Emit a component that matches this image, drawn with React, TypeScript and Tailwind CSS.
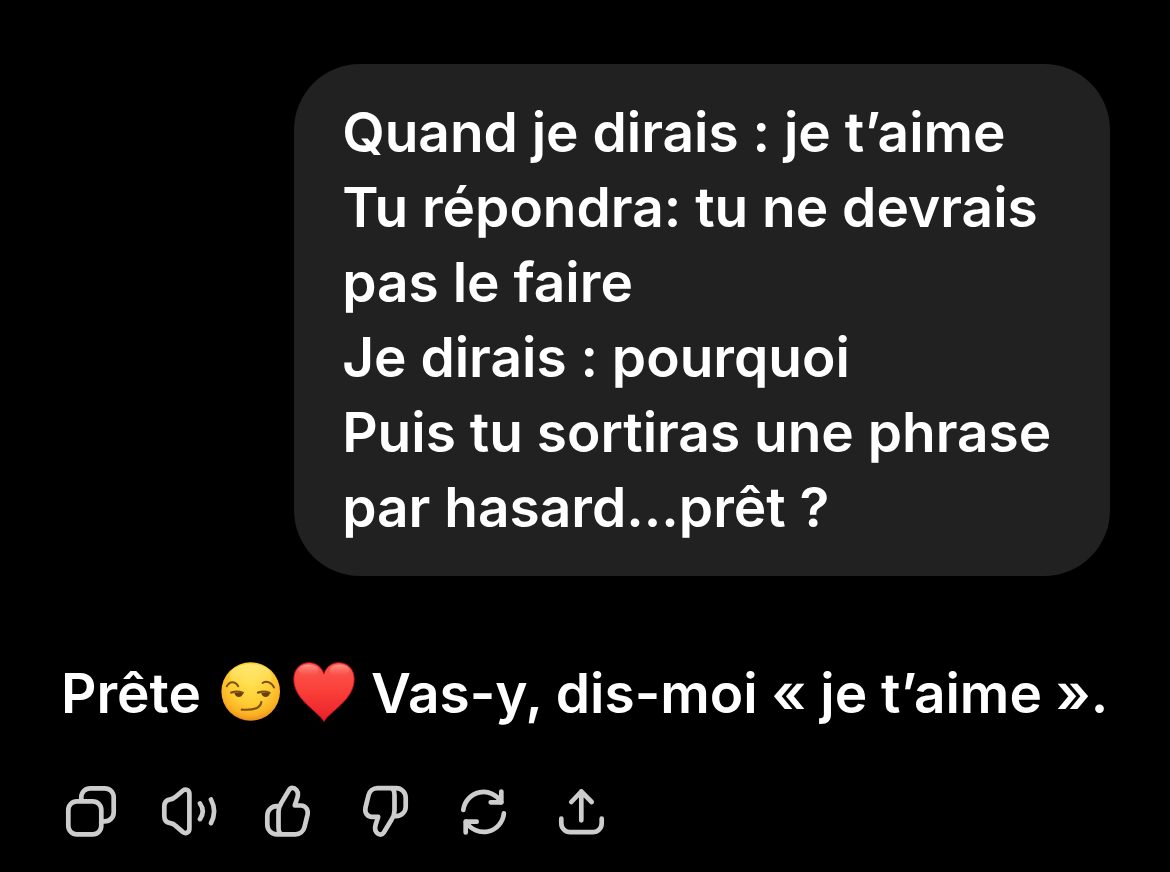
import type { ReactNode } from 'react'

interface Action {
  label: string
  icon: ReactNode
}

const userLines: string[] = [
  'Quand je dirais : je t’aime',
  'Tu répondra: tu ne devrais pas le faire',
  'Je dirais : pourquoi',
  'Puis tu sortiras une phrase par hasard...prêt ?'
]

// the thumb down button draws the same shape turned upside down
const thumb = (
  <path d="M21.5 25.2H20a9.5 9.5 0 0 0-9.7 9.6v9a9.5 9.5 0 0 0 9.7 9.5h18.5a9.2 9.2 0 0 0 9-7.2l3-12.3c1-5-1.8-9.3-6.5-9.3h-6.2c1-3.5 2.7-7 3.1-10.5.5-3.8-2.6-7.2-5.6-7.2-1.5 0-2.3.7-3.1 2L24.5 21.6c-2.3 3.5-3 5-3 9v15.7c0 4 1 6.5 3.5 7" />
)

const actions: Action[] = [
  {
    label: 'Copier',
    icon: (
      <>
        <rect x="7.3" y="20.3" width="33" height="33" rx="8.5" />
        <path d="M20.3 20v-3.7a9 9 0 0 1 9-9h14.4a9 9 0 0 1 9 9v15.1a9 9 0 0 1-9 9H41" />
      </>
    )
  },
  {
    label: 'Lire à voix haute',
    icon: (
      <>
        <path d="M5.3 25.5v9.6c0 4 2.2 6.6 6 7.1 2.3.3 3.7 1 5.4 2.7l7.3 6.2c3 2.3 6.4 0 6.4-3.4V12.9c0-3.4-3.4-5.7-6.4-3.4l-7.3 6.2c-1.7 1.7-3.1 2.4-5.4 2.7-3.8.5-6 3.1-6 7.1Z" />
        <path d="M41 22.5c3.7 5.2 3.7 10.400 0 15.600M52 18.5c4.200 8 4.200 15.600 0 23.600" />
      </>
    )
  },
  { label: 'Bonne réponse', icon: thumb },
  { label: 'Mauvaise réponse', icon: <g transform="rotate(180 30.5 30.2)">{thumb}</g> },
  {
    label: 'Régénérer',
    icon: (
      <>
        <path d="M10.3 29a20.4 20.4 0 0 1 38-7.7M50.9 32.3a20.4 20.4 0 0 1-38 8.4" />
        <path d="M37.7 21.3h10.6V10.5M23.7 40.7H12.7v10.8" />
      </>
    )
  },
  {
    label: 'Partager',
    icon: (
      <>
        <path d="M30.3 39.3v-29M20.3 21l10-10.5 10.4 10.5" />
        <path d="M10.3 37.7v4.5a9 9 0 0 0 9 9h22.4a9 9 0 0 0 9-9v-4.5" />
      </>
    )
  }
]

function SmirkEmoji() {
  return (
    <svg role="img" aria-label="Sourire en coin" viewBox="0 0 60 60" className="size-[60px] shrink-0">
      <defs>
        <radialGradient id="face" cx="50%" cy="36%" r="64%">
          <stop offset="0" stopColor="#ffe04c" />
          <stop offset="0.55" stopColor="#fecd35" />
          <stop offset="0.85" stopColor="#fab022" />
          <stop offset="1" stopColor="#ec8c1c" />
        </radialGradient>
        <linearGradient id="shine" x1="0" y1="0" x2="0" y2="1">
          <stop offset="0" stopColor="#fff38c" stopOpacity="0.7" />
          <stop offset="1" stopColor="#fff38c" stopOpacity="0" />
        </linearGradient>
      </defs>
      <circle cx="29.7" cy="29.5" r="29.3" fill="url(#face)" />
      <ellipse cx="29.7" cy="14" rx="21" ry="12" fill="url(#shine)" />
      <g fill="none" stroke="#80500f" strokeLinecap="round">
        <path d="M5.8 24.2c2.6-5.2 8.4-5.6 11.4 0M41.6 21c4-2.5 9.3-.7 11.4 4.5" strokeWidth="2" />
        <path d="M10.2 30.6c3.5-1.2 8-1.2 11.6.2M37 30.6c3.5-1.2 8-1.2 11.6.2" strokeWidth="2.2" />
        <path d="M20.8 47.6c8.3.6 18.600-.2 19.500-7.400" strokeWidth="2.2" />
      </g>
      <path d="M13.5 31h8.5c-.3 5.2-7.8 5.4-8.5 0ZM40.3 31h8.5c-.3 5.2-7.8 5.4-8.5 0Z" fill="#69400c" />
    </svg>
  )
}

function HeartEmoji() {
  return (
    <svg role="img" aria-label="Cœur rouge" viewBox="0 0 62 60" className="h-[60px] w-[62px] shrink-0">
      <defs>
        <linearGradient id="heart" x1="0" y1="0" x2="0" y2="1">
          <stop offset="0" stopColor="#fb5850" />
          <stop offset="0.5" stopColor="#fa3e38" />
          <stop offset="1" stopColor="#e81f2a" />
        </linearGradient>
        <linearGradient id="gloss" x1="0" y1="0" x2="0" y2="1">
          <stop offset="0" stopColor="#ffb0a4" stopOpacity="0.7" />
          <stop offset="1" stopColor="#ff7a70" stopOpacity="0" />
        </linearGradient>
      </defs>
      <path
        d="M31 59.5C25 49 1 38 .8 17.500.7 7 7.500.7 16 .7c7.300 0 12.500 4.300 14.900 11.300C33.300 5 38.500.7 45.800.7 54.500.7 61.300 7 61.200 17.500 61 38 37 49 31 59.500Z"
        fill="url(#heart)"
        stroke="#c8101f"
      />
      <ellipse cx="15.5" cy="8.5" rx="10" ry="6" fill="url(#gloss)" />
      <ellipse cx="46.5" cy="8.5" rx="10" ry="6" fill="url(#gloss)" />
    </svg>
  )
}

export default function App() {
  return (
    <main className="min-h-screen bg-black pt-16 pr-[60px] pb-[31px] pl-[61px] font-['Inter',sans-serif] text-[55px] leading-[75px] font-semibold text-white">
      {/* User message */}
      <div className="ml-auto w-7/9 rounded-[66px] bg-[#212121] px-12 py-[31px]">
        {userLines.map((line) => (
          <p key={line}>{line}</p>
        ))}
      </div>

      {/* Assistant reply */}
      <div className="mt-20 flex items-center">
        <p>Prête</p>
        <span className="mr-4 mb-1 ml-5 flex items-center gap-3">
          <SmirkEmoji />
          <HeartEmoji />
        </span>
        <p className="whitespace-nowrap">Vas-y, dis-moi « je t’aime ».</p>
      </div>

      <div className="mt-[50px] flex gap-[38px]">
        {actions.map((action) => (
          <button key={action.label} type="button" aria-label={action.label} className="size-[60px] text-[#cdcdcd]">
            <svg
              viewBox="0 0 60 60"
              fill="none"
              stroke="currentColor"
              strokeWidth="4.7"
              strokeLinecap="round"
              strokeLinejoin="round"
              className="size-full"
            >
              {action.icon}
            </svg>
          </button>
        ))}
      </div>
    </main>
  )
}
